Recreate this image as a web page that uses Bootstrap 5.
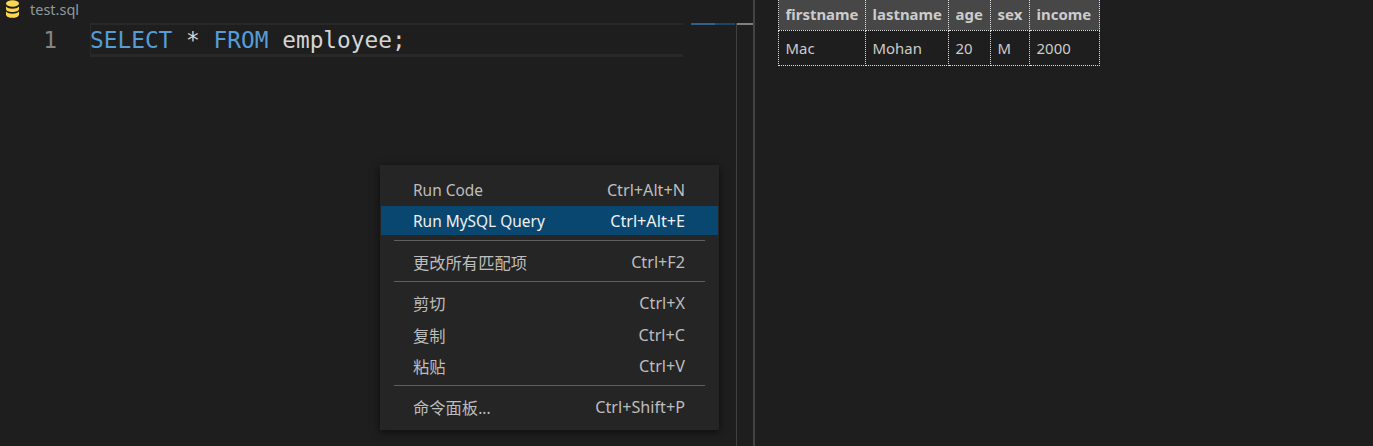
<!DOCTYPE html>
<html lang="en">
<head>
<meta charset="utf-8">
<title>test.sql</title>
<link href="https://cdn.jsdelivr.net/npm/bootstrap@5.3.0/dist/css/bootstrap.min.css" rel="stylesheet">
<style>
html,body{height:100%;overflow:hidden;}
body{background:#1e1e1e;color:#ccc;font-family:"Noto Sans","Noto Sans CJK SC",sans-serif;font-size:15px;}
.stage{height:446px;}
.edit-pane{width:755px;border-right:2px solid #434343;}
.tab-row{height:23px;padding-left:6px;gap:11px;color:#8d9a9e;font-size:14.5px;line-height:17px;padding-bottom:5px;}
.db-icon{width:13px;height:18px;flex:none;}
.code-rows{flex:1;}
.gutter{width:90px;padding:2px 33px 0 0;text-align:right;color:#858585;}
.mono{font-family:"DejaVu Sans Mono",monospace;font-size:22.8px;line-height:31px;}
.cur-line{width:593px;height:34px;border:solid #282828;border-width:2px 0 3px 0;white-space:pre;color:#d4d4d4;box-shadow:inset 1px 0 #282828;}
.kw{color:#569cd6;}
.mini{width:53px;padding:0 1px 0 8px;}
.mini-bar{height:2px;background:linear-gradient(90deg,#31608c 0 24px,#1f4468 24px);}
.ruler{width:17px;border-left:1px solid #404040;}
.ruler-mark{height:2px;background:#808080;}
.result-pane{padding-left:23px;}
.grid-tbl{border-collapse:collapse;table-layout:fixed;width:321px;font-size:14.9px;color:#ccc;}
.grid-tbl th,.grid-tbl td{border:1px dotted #e0e0e0;padding:0 0 0 6.6px;white-space:nowrap;}
.grid-tbl tr:first-child th{border-top:0;}
.grid-tbl th{background:#474747;height:30px;font-weight:700;padding-bottom:2px;}
.grid-tbl td{height:35px;padding-top:2px;}
.grid-tbl th:nth-child(1){width:87px;}
.grid-tbl th:nth-child(2){width:83px;}
.grid-tbl th:nth-child(3){width:42px;}
.grid-tbl th:nth-child(4){width:39px;}
.grid-tbl th:nth-child(5){width:70px;}
.ctx{left:380px;top:165px;width:339px;height:265px;padding:10px 1px 0;margin:0;background:#252526;border:0;border-radius:0;box-shadow:0 2px 8px rgba(0,0,0,.6);}
.ctx .dropdown-item{height:29px;margin-bottom:2.3px;padding:1px 33px 0 32px;color:#bdbdbd;font-size:15.45px;line-height:28px;}
.ctx .dropdown-item.sel{background:#094771;color:#f0f0f0;}
.ctx .dropdown-item .keys{font-size:16.2px;}
.ctx .dropdown-divider{margin:5px 13px 6px;border-top:1px solid #5f5f5f;opacity:1;}
.cjk{font-family:"Noto Sans CJK SC",sans-serif;font-size:16.3px;}
</style>
</head>
<body>
<div class="stage d-flex position-relative">
  <div class="edit-pane d-flex flex-column">
    <div class="tab-row d-flex align-items-center">
      <svg class="db-icon" viewBox="0 0 13 18" aria-hidden="true">
        <ellipse cx="6.5" cy="3.5" rx="6.5" ry="3.3" fill="#fdd74c"/>
        <path d="M0 6.600c1.300 1.600 3.800 2.200 6.500 2.200s5.200-.6 6.500-2.200V9c0 1.700-2.900 3-6.500 3S0 10.700 0 9z" fill="#fdd74c"/>
        <path d="M0 11.600c1.300 1.600 3.800 2.200 6.500 2.200s5.200-.6 6.500-2.200v2.800c0 2-2.900 3.400-6.500 3.400S0 16.400 0 14.400z" fill="#fdd74c"/>
      </svg>
      <span>test.sql</span>
    </div>
    <div class="code-rows d-flex">
      <div class="gutter mono">1</div>
      <div class="cur-line mono"><span class="kw">SELECT</span> * <span class="kw">FROM</span> employee;</div>
      <div class="mini"><div class="mini-bar"></div></div>
      <div class="ruler"><div class="ruler-mark"></div></div>
    </div>
  </div>
  <div class="result-pane">
    <table class="grid-tbl">
      <thead><tr><th>firstname</th><th>lastname</th><th>age</th><th>sex</th><th>income</th></tr></thead>
      <tbody><tr><td>Mac</td><td>Mohan</td><td>20</td><td>M</td><td>2000</td></tr></tbody>
    </table>
  </div>
  <ul class="dropdown-menu show ctx position-absolute list-unstyled">
    <li><a class="dropdown-item d-flex justify-content-between" href="#"><span>Run Code</span><span class="keys">Ctrl+Alt+N</span></a></li>
    <li><a class="dropdown-item sel d-flex justify-content-between" href="#"><span>Run MySQL Query</span><span class="keys">Ctrl+Alt+E</span></a></li>
    <li><hr class="dropdown-divider"></li>
    <li><a class="dropdown-item d-flex justify-content-between" href="#"><span class="cjk">更改所有匹配项</span><span class="keys">Ctrl+F2</span></a></li>
    <li><hr class="dropdown-divider"></li>
    <li><a class="dropdown-item d-flex justify-content-between" href="#"><span class="cjk">剪切</span><span class="keys">Ctrl+X</span></a></li>
    <li><a class="dropdown-item d-flex justify-content-between" href="#"><span class="cjk">复制</span><span class="keys">Ctrl+C</span></a></li>
    <li><a class="dropdown-item d-flex justify-content-between" href="#"><span class="cjk">粘贴</span><span class="keys">Ctrl+V</span></a></li>
    <li><hr class="dropdown-divider"></li>
    <li><a class="dropdown-item d-flex justify-content-between" href="#"><span><span class="cjk">命令面板</span>...</span><span class="keys">Ctrl+Shift+P</span></a></li>
  </ul>
</div>
<script src="https://cdn.jsdelivr.net/npm/bootstrap@5.3.0/dist/js/bootstrap.bundle.min.js"></script>
</body>
</html>
